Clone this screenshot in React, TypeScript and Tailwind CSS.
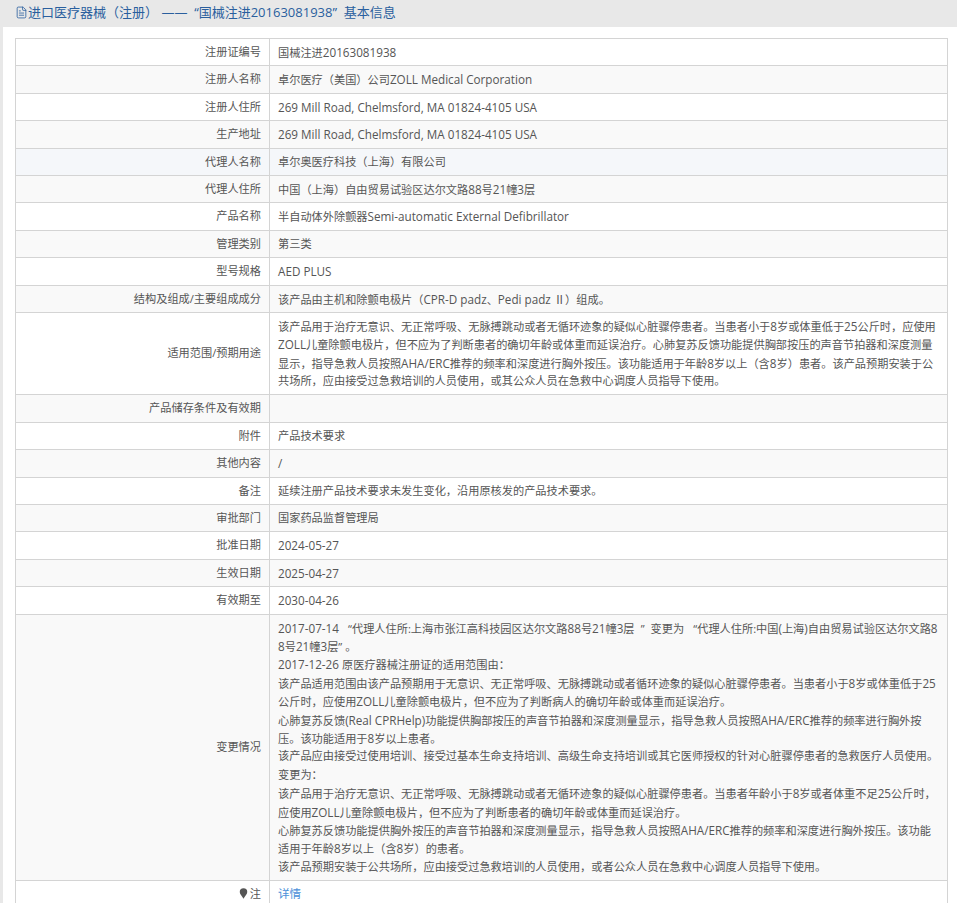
import { FileText } from 'lucide-react';

const rows: { label: string; lines: string[]; tint?: boolean }[] = [
  { label: '注册证编号', lines: ['国械注进20163081938'] },
  { label: '注册人名称', lines: ['卓尔医疗（美国）公司ZOLL Medical Corporation'] },
  { label: '注册人住所', lines: ['269 Mill Road, Chelmsford, MA 01824-4105 USA'] },
  { label: '生产地址', lines: ['269 Mill Road, Chelmsford, MA 01824-4105 USA'] },
  { label: '代理人名称', lines: ['卓尔奥医疗科技（上海）有限公司'], tint: true },
  { label: '代理人住所', lines: ['中国（上海）自由贸易试验区达尔文路88号21幢3层'] },
  { label: '产品名称', lines: ['半自动体外除颤器Semi-automatic External Defibrillator'] },
  { label: '管理类别', lines: ['第三类'] },
  { label: '型号规格', lines: ['AED PLUS'] },
  { label: '结构及组成/主要组成成分', lines: ['该产品由主机和除颤电极片（CPR-D padz、Pedi padz Ⅱ）组成。'] },
  {
    label: '适用范围/预期用途',
    lines: [
      '该产品用于治疗无意识、无正常呼吸、无脉搏跳动或者无循环迹象的疑似心脏骤停患者。当患者小于8岁或体重低于25公斤时，应使用',
      'ZOLL儿童除颤电极片，但不应为了判断患者的确切年龄或体重而延误治疗。心肺复苏反馈功能提供胸部按压的声音节拍器和深度测量',
      '显示，指导急救人员按照AHA/ERC推荐的频率和深度进行胸外按压。该功能适用于年龄8岁以上（含8岁）患者。该产品预期安装于公',
      '共场所，应由接受过急救培训的人员使用，或其公众人员在急救中心调度人员指导下使用。',
    ],
  },
  { label: '产品储存条件及有效期', lines: [''] },
  { label: '附件', lines: ['产品技术要求'] },
  { label: '其他内容', lines: ['/'] },
  { label: '备注', lines: ['延续注册产品技术要求未发生变化，沿用原核发的产品技术要求。'] },
  { label: '审批部门', lines: ['国家药品监督管理局'] },
  { label: '批准日期', lines: ['2024-05-27'] },
  { label: '生效日期', lines: ['2025-04-27'] },
  { label: '有效期至', lines: ['2030-04-26'] },
  {
    label: '变更情况',
    lines: [
      '2017-07-14   “代理人住所:上海市张江高科技园区达尔文路88号21幢3层  ”  变更为   “代理人住所:中国(上海)自由贸易试验区达尔文路8',
      '8号21幢3层” 。',
      '2017-12-26 原医疗器械注册证的适用范围由：',
      '该产品适用范围由该产品预期用于无意识、无正常呼吸、无脉搏跳动或者循环迹象的疑似心脏骤停患者。当患者小于8岁或体重低于25',
      '公斤时，应使用ZOLL儿童除颤电极片，但不应为了判断病人的确切年龄或体重而延误治疗。',
      '心肺复苏反馈(Real CPRHelp)功能提供胸部按压的声音节拍器和深度测量显示，指导急救人员按照AHA/ERC推荐的频率进行胸外按',
      '压。该功能适用于8岁以上患者。',
      '该产品应由接受过使用培训、接受过基本生命支持培训、高级生命支持培训或其它医师授权的针对心脏骤停患者的急救医疗人员使用。',
      '变更为：',
      '该产品用于治疗无意识、无正常呼吸、无脉搏跳动或者无循环迹象的疑似心脏骤停患者。当患者年龄小于8岁或者体重不足25公斤时，',
      '应使用ZOLL儿童除颤电极片，但不应为了判断患者的确切年龄或体重而延误治疗。',
      '心肺复苏反馈功能提供胸外按压的声音节拍器和深度测量显示，指导急救人员按照AHA/ERC推荐的频率和深度进行胸外按压。该功能',
      '适用于年龄8岁以上（含8岁）的患者。',
      '该产品预期安装于公共场所，应由接受过急救培训的人员使用，或者公众人员在急救中心调度人员指导下使用。',
    ],
  },
];

// latin runs sit a little wider than the 11.2px CJK in the reference
function Line({ text }: { text: string }) {
  const parts = text.split(/([A-Za-z0-9 ,.\-/()]+)/);
  return (
    <>
      {parts.map((part, i) =>
        i % 2 === 1 ? <span key={i} className="text-[11.7px]">{part}</span> : part,
      )}
    </>
  );
}

function PinIcon() {
  return (
    <svg viewBox="0 0 12 14" className="inline-block w-[9px] h-[11px] mr-[2px] align-[-1px]" fill="#555">
      <path d="M6 0a5 5 0 0 0-5 5c0 3 3.400 5.600 5 9 1.600-3.400 5-6 5-9a5 5 0 0 0-5-5z" />
    </svg>
  );
}

export default function App() {
  return (
    <div className="h-[903px] overflow-hidden bg-[#e8e8e8] font-['Open_Sans','Noto_Sans_CJK_SC',sans-serif] text-[11.2px] leading-[18.4px] text-[#555]">
      <div className="h-[27px] pl-[15px] pb-[2px] flex items-center text-[13px] text-[#2a5f9e] whitespace-pre">
        <FileText className="w-[13px] h-[13px] shrink-0" strokeWidth={1.5} />
        <span>进口医疗器械（注册） ——  “国械注进20163081938”  基本信息</span>
      </div>
      <div className="ml-[3px] h-[876px] bg-white pl-[12px] pt-[11px]">
        <table className="w-[933px] border-collapse table-fixed">
          <tbody>
            {rows.map((row, i) => (
              <tr key={row.label} className={row.tint ? 'bg-[#f5f7fa]' : i % 2 === 1 ? 'bg-[#f9f9f9]' : 'bg-white'}>
                <td className="w-[254px] border border-[#d4d4d4] px-[8px] py-[4px] text-right align-middle">
                  <div className="h-[18.4px]">{row.label}</div>
                </td>
                <td className="border border-[#d4d4d4] px-[8px] py-[4px] align-top whitespace-pre">
                  {row.lines.map((line, j) => (
                    <div key={j} className="h-[18.4px]"><Line text={line} /></div>
                  ))}
                </td>
              </tr>
            ))}
            <tr className="bg-white">
              <td className="border border-[#d4d4d4] px-[8px] py-[4px] text-right">
                <div className="h-[18.4px]"><PinIcon />注</div>
              </td>
              <td className="border border-[#d4d4d4] px-[8px] py-[4px] text-[#4a90d9] text-[11.6px]">
                <div className="h-[18.4px]">详情</div>
              </td>
            </tr>
          </tbody>
        </table>
      </div>
    </div>
  );
}
